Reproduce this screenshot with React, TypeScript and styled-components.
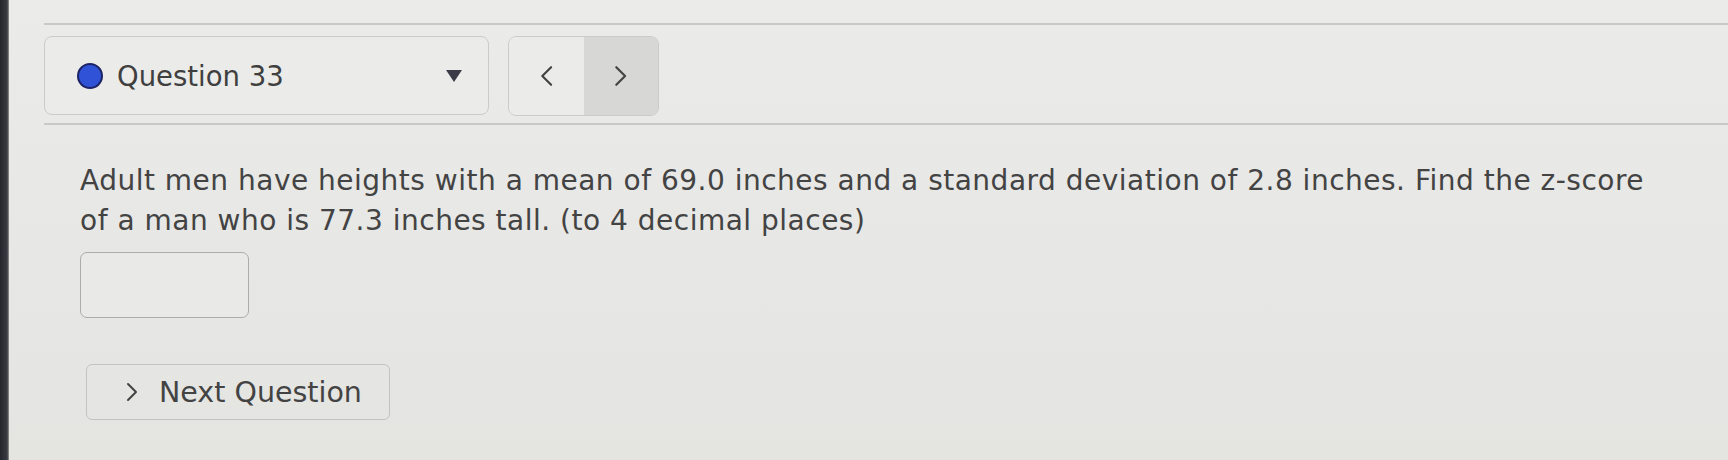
import styled, { createGlobalStyle } from 'styled-components';

const GlobalStyle = createGlobalStyle`
  html, body {
    margin: 0;
    padding: 0;
    background: #e8e8e6;
  }
  body {
    font-family: 'DejaVu Sans', 'Liberation Sans', sans-serif;
    color: #434343;
  }
`;

const Screen = styled.div`
  display: flex;
  width: 1728px;
  height: 460px;
  overflow: hidden;
  background: linear-gradient(180deg, #ebebe9 0%, #e8e8e6 40%, #e4e4e1 100%);
`;

const Bezel = styled.div`
  width: 9px;
  flex-shrink: 0;
  background: linear-gradient(90deg, #25262c 0%, #3a3b42 80%, #9a9892 100%);
`;

const Content = styled.div`
  flex: 1;
  padding: 23px 0 0 35px;
  display: flex;
  flex-direction: column;
`;

const Rule = styled.div`
  height: 2px;
  background: #c9c9c7;
`;

const Toolbar = styled.div`
  display: flex;
  gap: 19px;
  margin: 11px 0 7px;
`;

const Select = styled.div`
  width: 445px;
  height: 79px;
  box-sizing: border-box;
  border: 1.5px solid #cbcbc9;
  border-radius: 8px;
  background: #ebebe9;
  display: flex;
  align-items: center;
  padding: 0 24px 0 32px;
`;

const Dot = styled.span`
  width: 22px;
  height: 22px;
  border-radius: 50%;
  background: #2f52d6;
  border: 2px solid #1c2466;
  flex-shrink: 0;
`;

const SelectLabel = styled.span`
  font-size: 27.5px;
  color: #3f3f3f;
  margin-left: 14px;
  flex: 1;
`;

const Caret = styled.span`
  width: 0;
  height: 0;
  border-left: 8px solid transparent;
  border-right: 8px solid transparent;
  border-top: 12px solid #3b3b48;
  margin-right: 2px;
`;

const Pager = styled.div`
  display: flex;
  width: 151px;
  height: 80px;
  box-sizing: border-box;
  border: 1.5px solid #cbcbc9;
  border-radius: 8px;
  overflow: hidden;
`;

const PageButton = styled.div<{ $active?: boolean }>`
  flex: 1;
  display: flex;
  align-items: center;
  justify-content: center;
  background: ${(p) => (p.$active ? '#d7d7d5' : '#ebebe9')};
  color: #444;
`;

const QuestionText = styled.p`
  margin: 36px 0 0 36px;
  width: 1590px;
  font-size: 28px;
  letter-spacing: 0.5px;
  line-height: 40px;
  color: #434343;
`;

const Answer = styled.div`
  margin: 11px 0 0 36px;
  width: 169px;
  height: 66px;
  box-sizing: border-box;
  border: 1.5px solid #acacaa;
  border-radius: 7px;
  background: #e9e9e7;
`;

const NextButton = styled.div`
  margin: 46px 0 0 42px;
  width: 304px;
  height: 56px;
  box-sizing: border-box;
  border: 1.5px solid #c3c3c1;
  border-radius: 6px;
  display: flex;
  align-items: center;
  padding-left: 38px;
  gap: 20px;
  font-size: 28.5px;
  color: #434343;
`;

function Chevron({ dir, size = 18 }: { dir: 'left' | 'right'; size?: number }) {
  return (
    <svg width={size * 0.7} height={size} viewBox="0 0 14 20" fill="none">
      <path
        d={dir === 'left' ? 'M11 2 L3 10 L11 18' : 'M3 2 L11 10 L3 18'}
        stroke="currentColor"
        strokeWidth="2"
        strokeLinecap="round"
        strokeLinejoin="round"
      />
    </svg>
  );
}

export default function App() {
  return (
    <Screen>
      <GlobalStyle />
      <Bezel />
      <Content>
        <Rule />
        <Toolbar>
          <Select>
            <Dot />
            <SelectLabel>Question 33</SelectLabel>
            <Caret />
          </Select>
          <Pager>
            <PageButton>
              <Chevron dir="left" size={22} />
            </PageButton>
            <PageButton $active>
              <Chevron dir="right" size={22} />
            </PageButton>
          </Pager>
        </Toolbar>
        <Rule />
        <QuestionText>
          Adult men have heights with a mean of 69.0 inches and a standard deviation of 2.8 inches. Find the
          z-score of a man who is 77.3 inches tall. (to 4 decimal places)
        </QuestionText>
        <Answer />
        <NextButton>
          <Chevron dir="right" size={20} />
          Next Question
        </NextButton>
      </Content>
    </Screen>
  );
}
